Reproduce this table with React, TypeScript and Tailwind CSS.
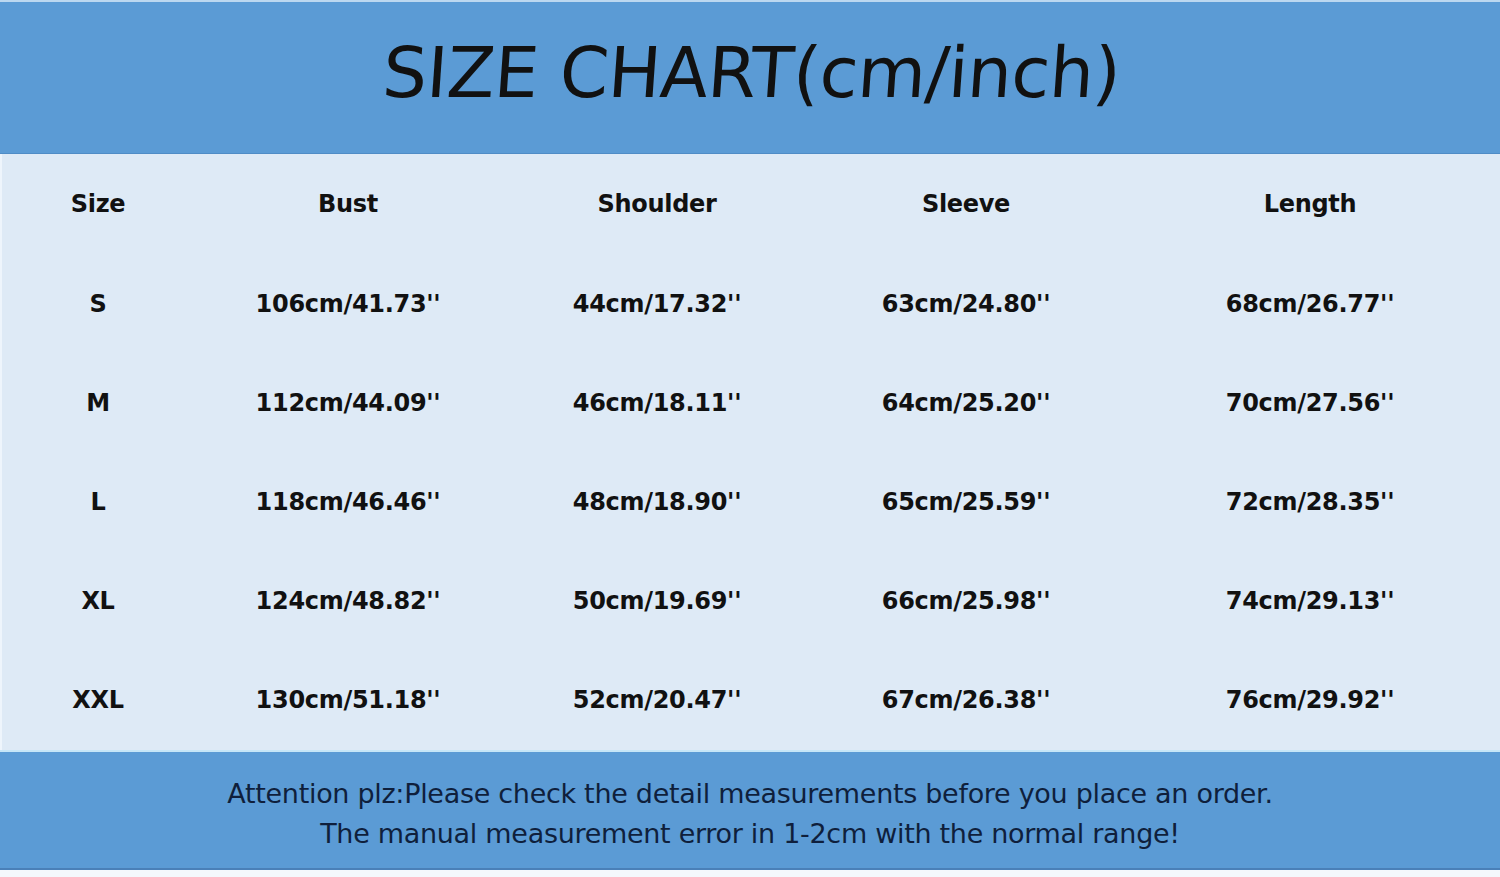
const columns = ["Size", "Bust", "Shoulder", "Sleeve", "Length"];

const rows = [
  ["S", "106cm/41.73''", "44cm/17.32''", "63cm/24.80''", "68cm/26.77''"],
  ["M", "112cm/44.09''", "46cm/18.11''", "64cm/25.20''", "70cm/27.56''"],
  ["L", "118cm/46.46''", "48cm/18.90''", "65cm/25.59''", "72cm/28.35''"],
  ["XL", "124cm/48.82''", "50cm/19.69''", "66cm/25.98''", "74cm/29.13''"],
  ["XXL", "130cm/51.18''", "52cm/20.47''", "67cm/26.38''", "76cm/29.92''"],
];

export default function App() {
  return (
    <div className="w-[1500px] h-[877px] bg-white flex flex-col overflow-hidden">
      <div className="h-[2px] bg-[#bcd8f0]" />

      {/* title band */}
      <div className="h-[152px] bg-[#5b9bd5] border-b border-[#4f8cc6] flex items-center justify-center pl-[4px]">
        <h1 className="font-['DejaVu_Sans',sans-serif] text-[70px] tracking-[-0.5px] text-[#111] leading-none -mt-[10px] skew-x-[-4deg]">
          SIZE CHART(cm/inch)
        </h1>
      </div>

      {/* table */}
      <div className="h-[596px] bg-[#deeaf6] border-l-2 border-[#eef5fc] grid grid-cols-[192px_308px_310px_308px_380px] grid-rows-[100px_99px_99px_99px_99px_100px] font-['DejaVu_Sans',sans-serif] font-bold text-[24px] text-[#111] tracking-[-0.3px]">
        {columns.map((c) => (
          <div key={c} className="flex items-center justify-center">
            {c}
          </div>
        ))}
        {rows.map((r) =>
          r.map((cell, i) => (
            <div key={r[0] + i} className="flex items-center justify-center">
              {cell}
            </div>
          ))
        )}
      </div>

      {/* note */}
      <div className="h-[120px] bg-[#5b9bd5] border-t-2 border-[#c6e6f7] border-b-2 border-b-[#4a80b8] flex flex-col items-center justify-center pt-[8px] font-['DejaVu_Sans',sans-serif] text-[27px] leading-[40px] text-[#0f1f3c] tracking-[-0.3px]">
        <p>Attention plz:Please check the detail measurements before you place an order.</p>
        <p>The manual measurement error in 1-2cm with the normal range!</p>
      </div>

      <div className="flex-1 bg-[#f4f8fc]" />
    </div>
  );
}
